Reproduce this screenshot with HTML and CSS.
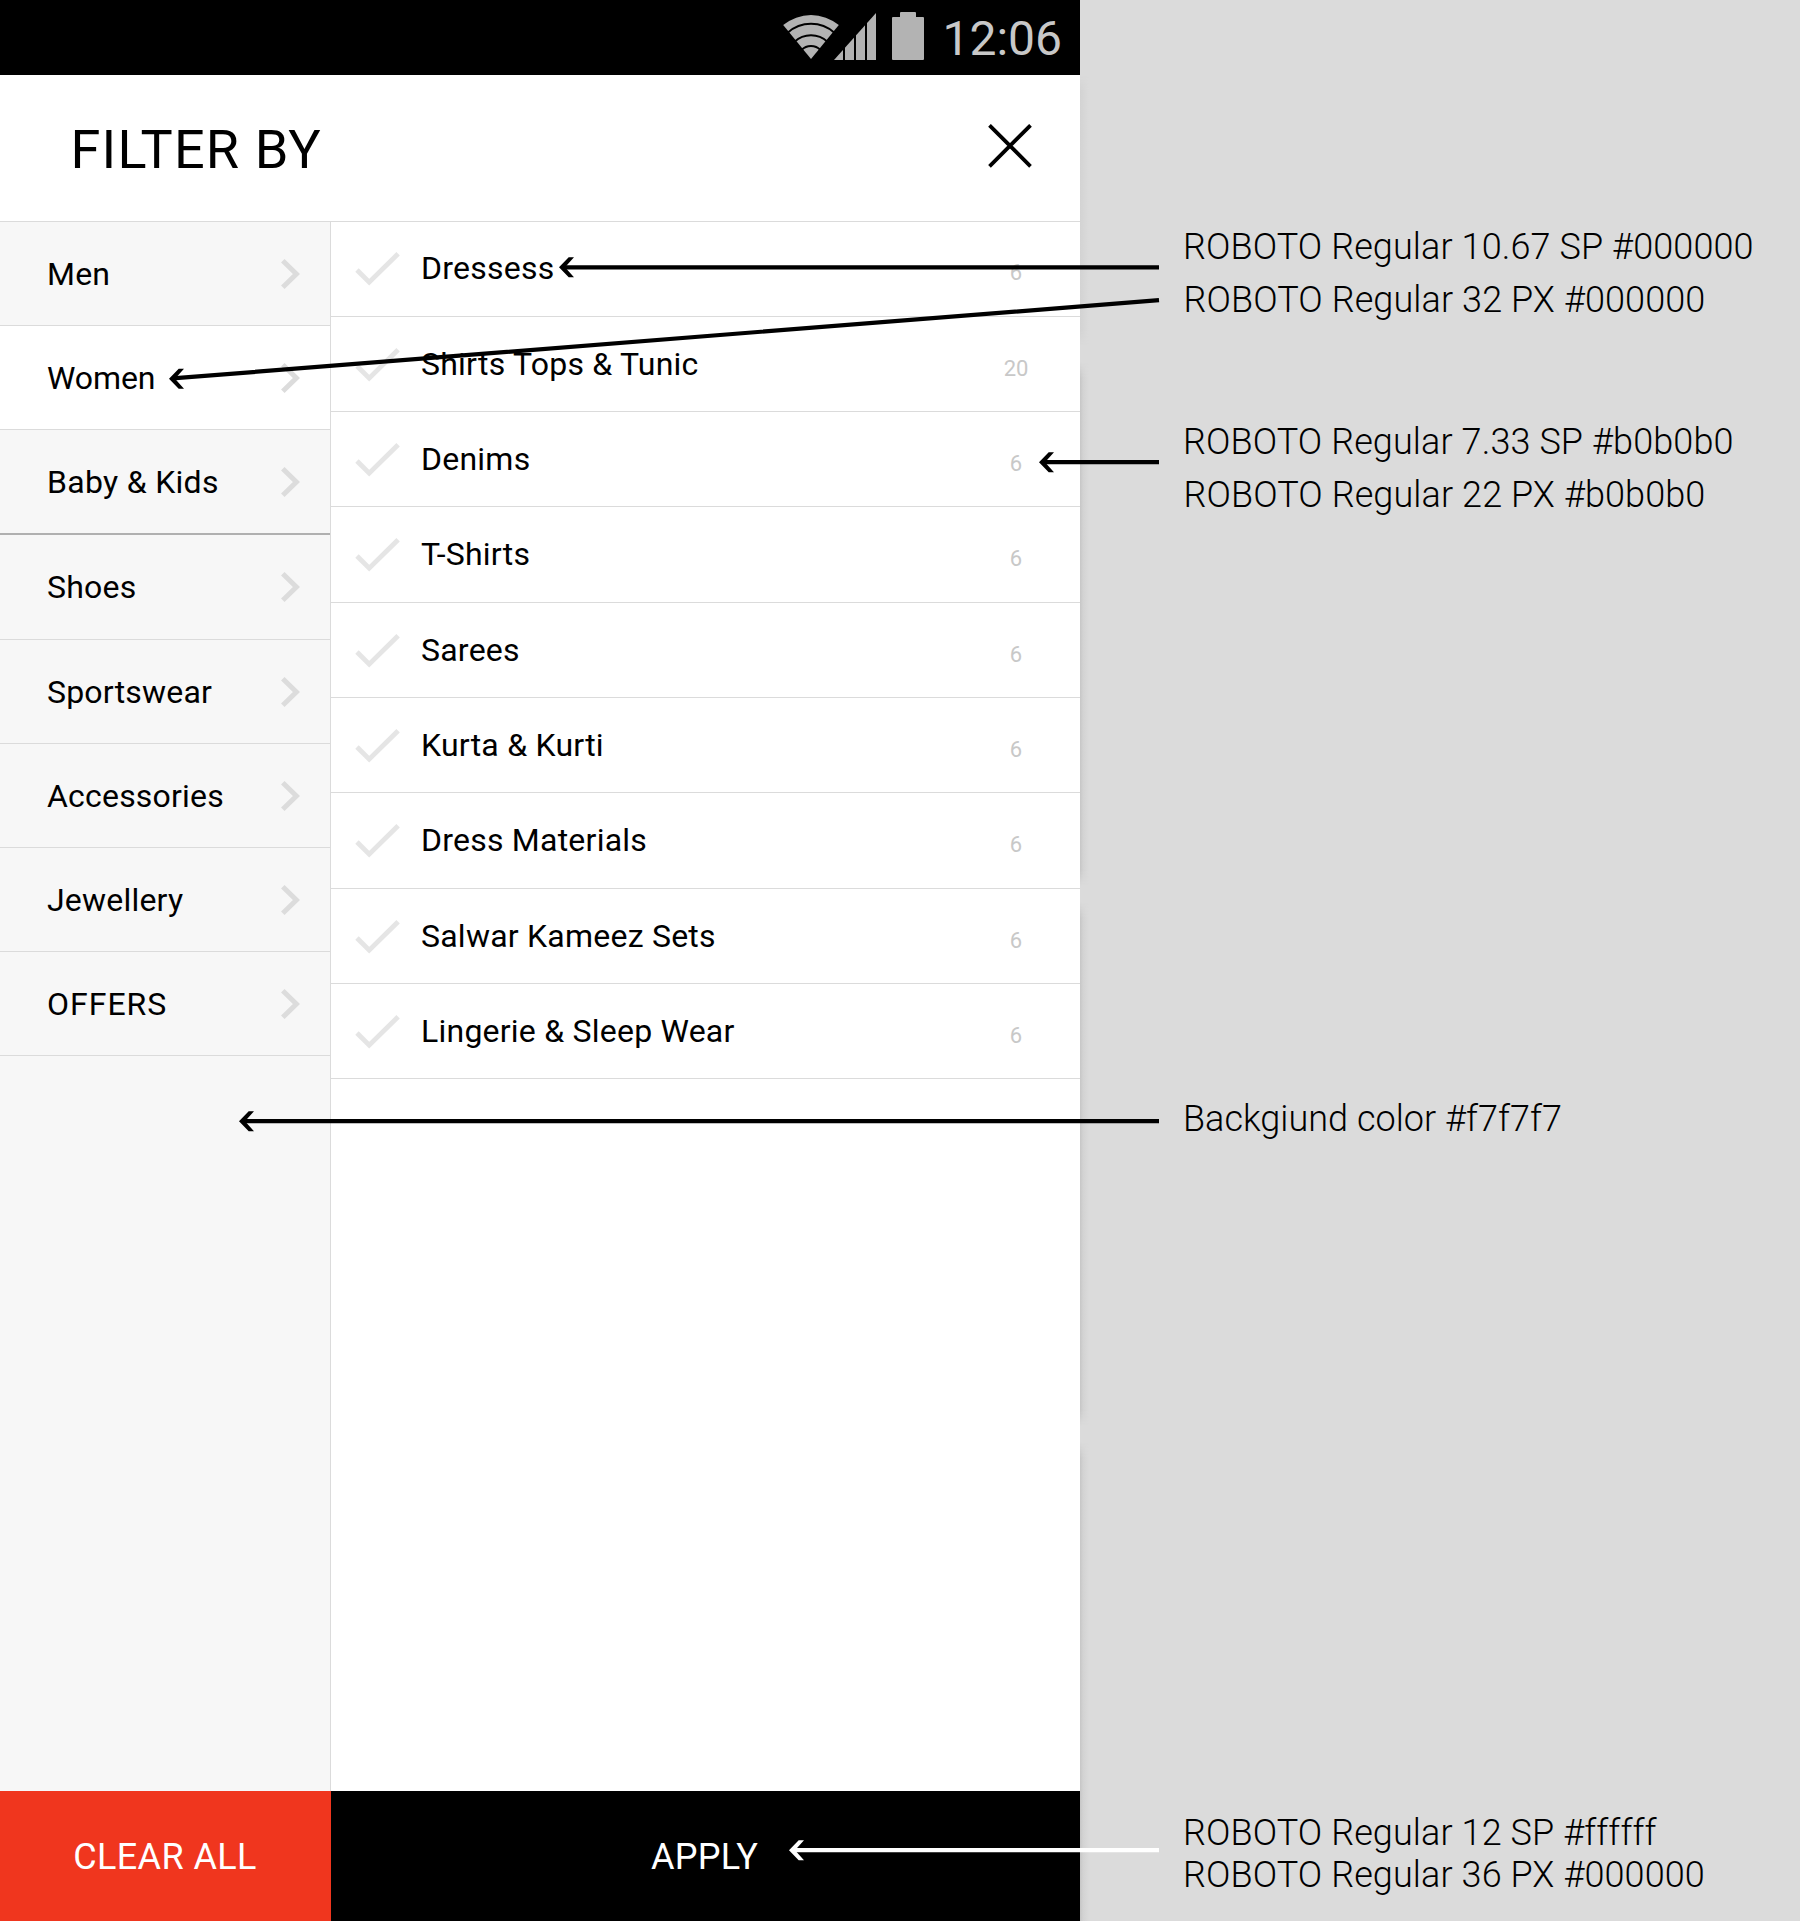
FILE: index.html
```
<!DOCTYPE html>
<html lang="en">
<head>
<meta charset="utf-8">
<title>Filter by</title>
<link rel="stylesheet" href="styles.css">
</head>
<body>
<svg class="defs" width="0" height="0" aria-hidden="true">
  <symbol id="chevron" viewBox="0 0 20 32"><path d="M1.8 2.7 15.4 16 1.8 29.3" fill="none" stroke="#dcdcdc" stroke-width="5"/></symbol>
  <symbol id="check" viewBox="0 0 46 36"><path d="M3 20 15.2 32.2 44.1 3.8" fill="none" stroke="#e5e5e5" stroke-width="4.8"/></symbol>
</svg>
<div class="board">
  <main class="phone">
    <div class="status">
      <svg class="status-icons" width="142" height="75" viewBox="782 0 142 75">
        <g fill="#b3b3b3">
          <path d="M811 59 783.2 25A44 44 0 0 1 838.8 25Z"/>
          <path d="M834 60 876 13V60Z"/>
          <path d="M892 18a1 1 0 0 1 1-1h7v-4a1 1 0 0 1 1-1h14a1 1 0 0 1 1 1v4h7a1 1 0 0 1 1 1v41a1 1 0 0 1-1 1h-30a1 1 0 0 1-1-1z"/>
        </g>
        <g fill="none" stroke="#000" stroke-width="2">
          <path d="M787.6 32.8A35 35 0 0 1 834.4 32.8"/>
          <path d="M794.5 41.7A24 24 0 0 1 827.5 41.7"/>
          <path d="M801.5 50A13.3 13.3 0 0 1 820.5 50"/>
          <path d="M844 10V61M855 10V61M866 10V61"/>
        </g>
      </svg>
      <span class="clock">12:06</span>
    </div>
    <header class="header">
      <h1 class="title">FILTER BY</h1>
      <svg class="close" width="44" height="44" viewBox="0 0 44 44"><path d="M1.5 1.3 42.5 42.3M42.5 1.3 1.5 42.3" stroke="#000" stroke-width="3.8"/></svg>
    </header>
    <div class="content">
      <nav class="sidebar">
        <div class="cat">Men<svg class="chevron"><use href="#chevron"/></svg></div>
        <div class="cat active">Women<svg class="chevron"><use href="#chevron"/></svg></div>
        <div class="cat divider">Baby &amp; Kids<svg class="chevron"><use href="#chevron"/></svg></div>
        <div class="cat tall">Shoes<svg class="chevron"><use href="#chevron"/></svg></div>
        <div class="cat">Sportswear<svg class="chevron"><use href="#chevron"/></svg></div>
        <div class="cat">Accessories<svg class="chevron"><use href="#chevron"/></svg></div>
        <div class="cat">Jewellery<svg class="chevron"><use href="#chevron"/></svg></div>
        <div class="cat caps">OFFERS<svg class="chevron"><use href="#chevron"/></svg></div>
      </nav>
      <section class="options">
        <div class="option first"><svg class="check"><use href="#check"/></svg><span class="name">Dressess</span><span class="count">6</span></div>
        <div class="option"><svg class="check"><use href="#check"/></svg><span class="name">Shirts Tops &amp; Tunic</span><span class="count">20</span></div>
        <div class="option"><svg class="check"><use href="#check"/></svg><span class="name">Denims</span><span class="count">6</span></div>
        <div class="option tall"><svg class="check"><use href="#check"/></svg><span class="name">T-Shirts</span><span class="count">6</span></div>
        <div class="option"><svg class="check"><use href="#check"/></svg><span class="name">Sarees</span><span class="count">6</span></div>
        <div class="option"><svg class="check"><use href="#check"/></svg><span class="name">Kurta &amp; Kurti</span><span class="count">6</span></div>
        <div class="option tall"><svg class="check"><use href="#check"/></svg><span class="name">Dress Materials</span><span class="count">6</span></div>
        <div class="option"><svg class="check"><use href="#check"/></svg><span class="name">Salwar Kameez Sets</span><span class="count">6</span></div>
        <div class="option"><svg class="check"><use href="#check"/></svg><span class="name">Lingerie &amp; Sleep Wear</span><span class="count">6</span></div>
      </section>
    </div>
    <footer class="footer">
      <div class="clear">CLEAR ALL</div>
      <div class="apply">APPLY</div>
    </footer>
  </main>
  <aside class="notes">
    <div class="note"><p>ROBOTO Regular 10.67 SP #000000</p><p class="second">ROBOTO Regular 32 PX #000000</p></div>
    <div class="note count-note"><p>ROBOTO Regular 7.33 SP #b0b0b0</p><p class="second">ROBOTO Regular 22 PX #b0b0b0</p></div>
    <div class="note bg-note"><p>Backgiund color #f7f7f7</p></div>
    <div class="note button-note"><p>ROBOTO Regular 12 SP #ffffff</p><p>ROBOTO Regular 36 PX #000000</p></div>
  </aside>
  <div class="edge"><i class="shade faint"></i><i class="shade"></i><i class="shade"></i><i class="shade last"></i></div>
  <svg class="arrows" width="1800" height="1921" viewBox="0 0 1800 1921">
    <defs><path id="head" d="M0 0 9.7-10H15L6 0 15 10H9.7Z"/></defs>
    <g stroke="#000" stroke-width="4.2">
      <path d="M562.5 267.3H1159M172.5 378.4 1159 300.2M1042.5 462.2H1159M242.5 1121.2H1159"/>
      <path d="M792.5 1850.2H1159" stroke="#fff"/>
    </g>
    <use href="#head" x="559" y="267.3"/>
    <use href="#head" x="169" y="378.8"/>
    <use href="#head" x="1039" y="462.2"/>
    <use href="#head" x="239" y="1121.2"/>
    <use href="#head" x="789" y="1850.2" fill="#fff"/>
  </svg>
</div>
</body>
</html>
```
FILE: styles.css
```
* { box-sizing: border-box; }
body { margin: 0; background: #dbdbdb; font-family: Roboto, "Liberation Sans", sans-serif; color: #000; }
h1, p { margin: 0; font-weight: inherit; }
svg { display: block; flex: none; }
.defs { position: absolute; }

.board { position: relative; display: flex; width: 1800px; height: 1921px; overflow: hidden; }
.phone { display: flex; flex-direction: column; width: 1080px; height: 1921px; background: #fff; }

.status { display: flex; justify-content: flex-end; align-items: center; height: 75px; padding-right: 18px; background: #000; }
.clock { margin: 2px 0 0 18px; font-size: 48px; line-height: 56px; color: #c8c8c8; }

.header { display: flex; justify-content: space-between; align-items: center; height: 147px; padding: 0 48px 0 70.5px; border-bottom: 1px solid #dbdbdb; }
.title { margin-top: 3px; font-size: 54px; line-height: 64px; letter-spacing: 1.2px; }
.close { margin-top: -4px; }

.content { display: flex; flex: 1; }
.sidebar { width: 331px; background: #f7f7f7; border-right: 1px solid #dbdbdb; }
.cat { display: flex; justify-content: space-between; align-items: center; height: 104px; padding: 1px 29px 0 47px; border-bottom: 1px solid #dbdbdb; font-size: 32px; line-height: 38px; letter-spacing: .2px; }
.cat.active { background: #fff; letter-spacing: -.1px; }
.cat.divider { height: 105px; border-bottom: 2px solid #b0b0b0; letter-spacing: .3px; }
.cat.tall { height: 105px; padding-bottom: 1px; }
.cat.caps { letter-spacing: 1px; }
.chevron { width: 20px; height: 32px; }

.options { flex: 1; }
.option { display: flex; align-items: center; height: 95px; padding: 0 34px 0 23px; border-bottom: 1px solid #dbdbdb; }
.option.first { padding-bottom: 2px; }
.option.tall { height: 96px; padding-bottom: 2px; }
.check { width: 46px; height: 36px; }
.name { flex: 1; padding-left: 21px; font-size: 32px; line-height: 38px; letter-spacing: .23px; }
.count { width: 60px; margin-top: 10px; font-size: 22px; line-height: 26px; text-align: center; color: #c8c8c8; }

.footer { display: flex; height: 130px; font-size: 36px; line-height: 42px; color: #fff; }
.clear, .apply { display: flex; align-items: center; justify-content: center; padding-top: 1px; letter-spacing: .4px; }
.clear { width: 331px; padding-right: 1px; background: #f0361e; }
.apply { flex: 1; padding-right: 2px; background: #000; letter-spacing: .3px; }

.notes { flex: 1; padding: 221px 0 0 103px; font-size: 36px; font-weight: 300; line-height: 53px; letter-spacing: .11px; white-space: nowrap; }
.second { padding-left: .5px; }
.count-note { margin-top: 89px; }
.bg-note { margin-top: 571px; letter-spacing: .03px; }
.button-note { margin-top: 666px; line-height: 42px; }

/* soft shadow cast by the stacked screens along the phone's right edge */
.edge { position: absolute; left: 1080px; top: 75px; display: flex; flex-direction: column; gap: 16px; width: 9px; height: 1846px; }
.shade { height: 524px; background: linear-gradient(90deg, #c6c6c6, #d3d3d3 35%, #dbdbdb); -webkit-mask-image: linear-gradient(transparent, #000 16px, #000 calc(100% - 16px), transparent); mask-image: linear-gradient(transparent, #000 16px, #000 calc(100% - 16px), transparent); }
.shade.faint { height: 271px; background: linear-gradient(90deg, #d3d3d3, #dbdbdb); }
.shade.last { flex: 1; -webkit-mask-image: linear-gradient(transparent, #000 16px); mask-image: linear-gradient(transparent, #000 16px); }

.arrows { position: absolute; left: 0; top: 0; }
```
